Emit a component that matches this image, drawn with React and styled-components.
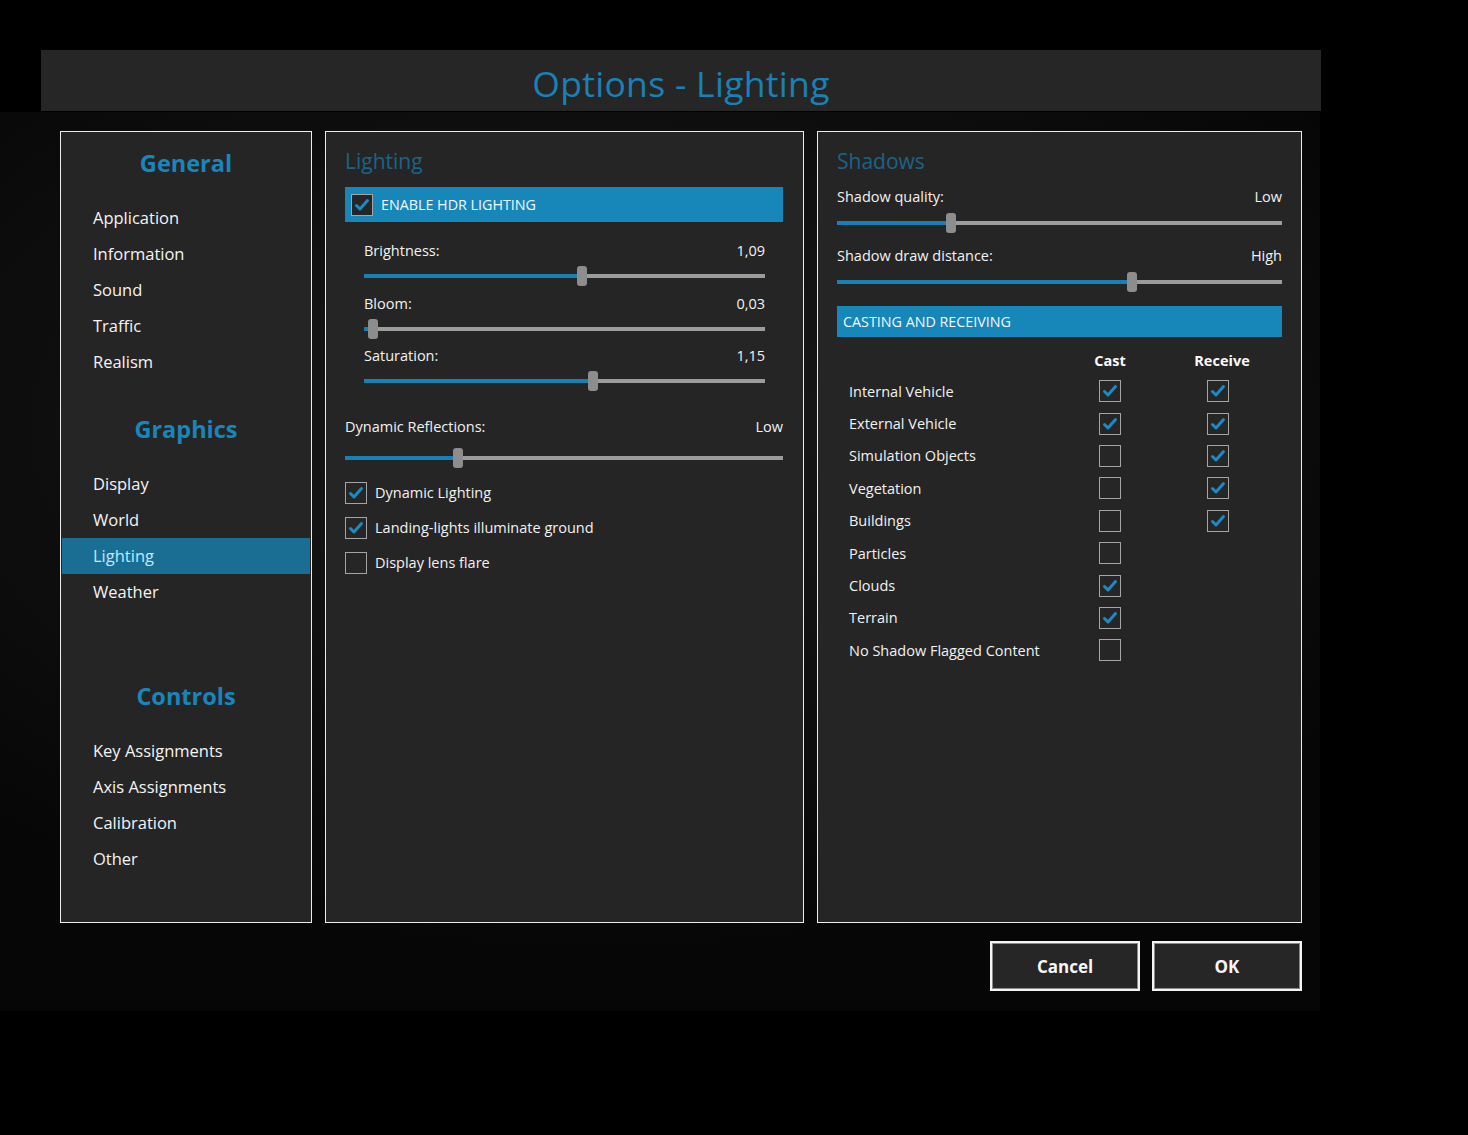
import React from "react";
import styled, { createGlobalStyle } from "styled-components";

const GlobalStyle = createGlobalStyle`
  body {
    margin: 0;
    background: #000;
    font-family: "Open Sans", "Noto Sans", sans-serif;
    color: #f2f2f2;
  }
`;

const generalItems = ["Application", "Information", "Sound", "Traffic", "Realism"];
const graphicsItems = ["Display", "World", "Lighting", "Weather"];
const controlItems = ["Key Assignments", "Axis Assignments", "Calibration", "Other"];

const shadowRows = [
  { name: "Internal Vehicle", cast: true, receive: true },
  { name: "External Vehicle", cast: true, receive: true },
  { name: "Simulation Objects", cast: false, receive: true },
  { name: "Vegetation", cast: false, receive: true },
  { name: "Buildings", cast: false, receive: true },
  { name: "Particles", cast: false },
  { name: "Clouds", cast: true },
  { name: "Terrain", cast: true },
  { name: "No Shadow Flagged Content", cast: false },
];

function Checkbox({ checked }) {
  return (
    <Box>
      {checked && (
        <svg width="20" height="20" viewBox="0 0 20 20">
          <path d="M4.5 10.5 L8 14 L15.5 5.5" fill="none" stroke="#1c8ac4" strokeWidth="3" strokeLinecap="round" strokeLinejoin="round" />
        </svg>
      )}
    </Box>
  );
}

function Slider({ label, value, pos, mt, h }) {
  return (
    <SliderBlock $mt={mt}>
      <SliderLabel>
        <span>{label}</span>
        <span>{value}</span>
      </SliderLabel>
      <TrackArea $h={h}>
        <Track>
          <Fill style={{ width: `${pos}%` }} />
          <Thumb style={{ left: `${pos}%` }} />
        </Track>
      </TrackArea>
    </SliderBlock>
  );
}

function NavGroup({ title, items, active, mt }) {
  return (
    <NavSection $mt={mt}>
      <NavHeading>{title}</NavHeading>
      {items.map((item) => (
        <NavItem key={item} $active={item === active}>
          {item}
        </NavItem>
      ))}
    </NavSection>
  );
}

export default function App() {
  return (
    <Page>
      <GlobalStyle />
      <Dialog>
        <TitleBar>Options - Lighting</TitleBar>
        <Stage>
          <Columns>
            <NavPanel>
              <NavGroup title="General" items={generalItems} mt={0} />
              <NavGroup title="Graphics" items={graphicsItems} active="Lighting" mt={32} />
              <NavGroup title="Controls" items={controlItems} mt={69} />
            </NavPanel>

            <Panel $width={479} $pr={20}>
              <SectionTitle>Lighting</SectionTitle>
              <BlueBar $h={35}>
                <Checkbox checked />
                <BarText>ENABLE HDR LIGHTING</BarText>
              </BlueBar>
              <Indented>
                <Slider label="Brightness:" value="1,09" pos={54.4} mt={18} h={28} />
                <Slider label="Bloom:" value="0,03" pos={2.3} mt={3} h={28} />
                <Slider label="Saturation:" value="1,15" pos={57.1} mt={2} h={28} />
              </Indented>
              <Slider label="Dynamic Reflections:" value="Low" pos={25.8} mt={21} h={40} />
              <CheckList>
                <CheckRow>
                  <Checkbox checked />
                  <span>Dynamic Lighting</span>
                </CheckRow>
                <CheckRow>
                  <Checkbox checked />
                  <span>Landing-lights illuminate ground</span>
                </CheckRow>
                <CheckRow>
                  <Checkbox />
                  <span>Display lens flare</span>
                </CheckRow>
              </CheckList>
            </Panel>

            <Panel $width={485} $pr={19}>
              <SectionTitle>Shadows</SectionTitle>
              <Slider label="Shadow quality:" value="Low" pos={25.6} mt={10} h={30} />
              <Slider label="Shadow draw distance:" value="High" pos={66.3} mt={7} h={30} />
              <BlueBar $h={31} $mt={9}>
                <BarText $small>CASTING AND RECEIVING</BarText>
              </BlueBar>
              <ShadowTable>
                <span />
                <ColHead>Cast</ColHead>
                <ColHead $shift={4}>Receive</ColHead>
                {shadowRows.map((row) => (
                  <React.Fragment key={row.name}>
                    <RowLabel>{row.name}</RowLabel>
                    <Cell>
                      <Checkbox checked={row.cast} />
                    </Cell>
                    <Cell>{row.receive !== undefined && <Checkbox checked={row.receive} />}</Cell>
                  </React.Fragment>
                ))}
              </ShadowTable>
            </Panel>
          </Columns>
          <Footer>
            <Button>Cancel</Button>
            <Button>OK</Button>
          </Footer>
        </Stage>
      </Dialog>
    </Page>
  );
}

const Page = styled.div`
  width: 1468px;
  height: 1135px;
  background: #000;
  overflow: hidden;
`;

const Dialog = styled.div`
  width: 1320px;
  padding-top: 50px;
`;

const TitleBar = styled.div`
  margin-left: 41px;
  width: 1280px;
  height: 61px;
  background: #262626;
  color: #1b80b4;
  font-size: 35.5px;
  line-height: 66px;
  text-align: center;
  letter-spacing: 0.3px;
`;

const Stage = styled.div`
  margin-top: 1px;
  padding: 19px 18px 20px 60px;
  background: radial-gradient(ellipse 70% 60% at 45% 35%, #1b1b1b 0%, #0f0f0f 55%, #060606 100%);
`;

const Columns = styled.div`
  display: flex;
  gap: 13px;
  height: 792px;
`;

const PanelBase = styled.div`
  box-sizing: border-box;
  height: 100%;
  background: #252525;
  border: 1px solid #ececec;
`;

const NavPanel = styled(PanelBase)`
  width: 252px;
  padding-top: 14px;
`;

const NavSection = styled.div`
  margin-top: ${(p) => p.$mt}px;
`;

const NavHeading = styled.div`
  height: 36px;
  line-height: 34px;
  margin-bottom: 18px;
  text-align: center;
  font-size: 23.5px;
  font-weight: 700;
  color: #1a85ba;
`;

const NavItem = styled.div`
  height: 36px;
  line-height: 36px;
  padding-left: 31px;
  margin: 0 1px;
  font-size: 16.5px;
  color: ${(p) => (p.$active ? "#bfe9ff" : "#f4f4f4")};
  background: ${(p) => (p.$active ? "#1b6e93" : "transparent")};
`;

const Panel = styled(PanelBase)`
  width: ${(p) => p.$width}px;
  padding: 14px ${(p) => p.$pr}px 0 19px;
  font-size: 14.5px;
`;

const SectionTitle = styled.div`
  height: 30px;
  line-height: 30px;
  font-size: 21px;
  color: #1d6387;
`;

const BlueBar = styled.div`
  display: flex;
  align-items: center;
  gap: 8px;
  height: ${(p) => p.$h}px;
  margin-top: ${(p) => p.$mt ?? 11}px;
  padding-left: 6px;
  background: #1786b8;
`;

const BarText = styled.span`
  font-size: ${(p) => (p.$small ? 14.3 : 14.3)}px;
  color: #f4f8fb;
`;

const Indented = styled.div`
  padding-left: 19px;
  width: 401px;
`;

const SliderBlock = styled.div`
  margin-top: ${(p) => p.$mt}px;
`;

const SliderLabel = styled.div`
  display: flex;
  justify-content: space-between;
  height: 22px;
  line-height: 22px;
`;

const TrackArea = styled.div`
  display: flex;
  align-items: center;
  height: ${(p) => p.$h}px;
`;

const Track = styled.div`
  position: relative;
  width: 100%;
  height: 4px;
  background: #9c9c9c;
`;

const Fill = styled.div`
  height: 100%;
  background: #1a80b4;
`;

const Thumb = styled.div`
  position: absolute;
  top: 50%;
  width: 10px;
  height: 20px;
  margin-left: -5px;
  transform: translateY(-50%);
  border-radius: 3px;
  background: #8d8d8d;
`;

const CheckList = styled.div`
  display: flex;
  flex-direction: column;
  margin-top: -3px;
`;

const CheckRow = styled.div`
  display: flex;
  align-items: center;
  gap: 8px;
  height: 35px;
`;

const Box = styled.div`
  box-sizing: border-box;
  display: flex;
  align-items: center;
  justify-content: center;
  width: 22px;
  height: 22px;
  flex-shrink: 0;
  border: 1px solid #a4a4a4;
  background: #262626;
`;

const ShadowTable = styled.div`
  display: grid;
  grid-template-columns: 211px 100px 116px;
  grid-template-rows: 30px repeat(9, 32.4px);
  align-items: center;
  margin-top: 8px;
  padding-left: 12px;
`;

const ColHead = styled.div`
  text-align: center;
  font-weight: 700;
  padding-left: ${(p) => (p.$shift || 0) * 2}px;
  color: #fafafa;
`;

const RowLabel = styled.div`
  color: #f2f2f2;
`;

const Cell = styled.div`
  display: flex;
  justify-content: center;
`;

const Footer = styled.div`
  display: flex;
  justify-content: flex-end;
  gap: 12px;
  margin-top: 18px;
`;

const Button = styled.button`
  box-sizing: border-box;
  width: 150px;
  height: 50px;
  border: 2px solid #f4f4f4;
  box-shadow: inset 0 0 0 1px #8a8a8a;
  background: #262626;
  color: #f6f6f6;
  font-family: "Open Sans", sans-serif;
  font-size: 17px;
  font-weight: 700;
`;
